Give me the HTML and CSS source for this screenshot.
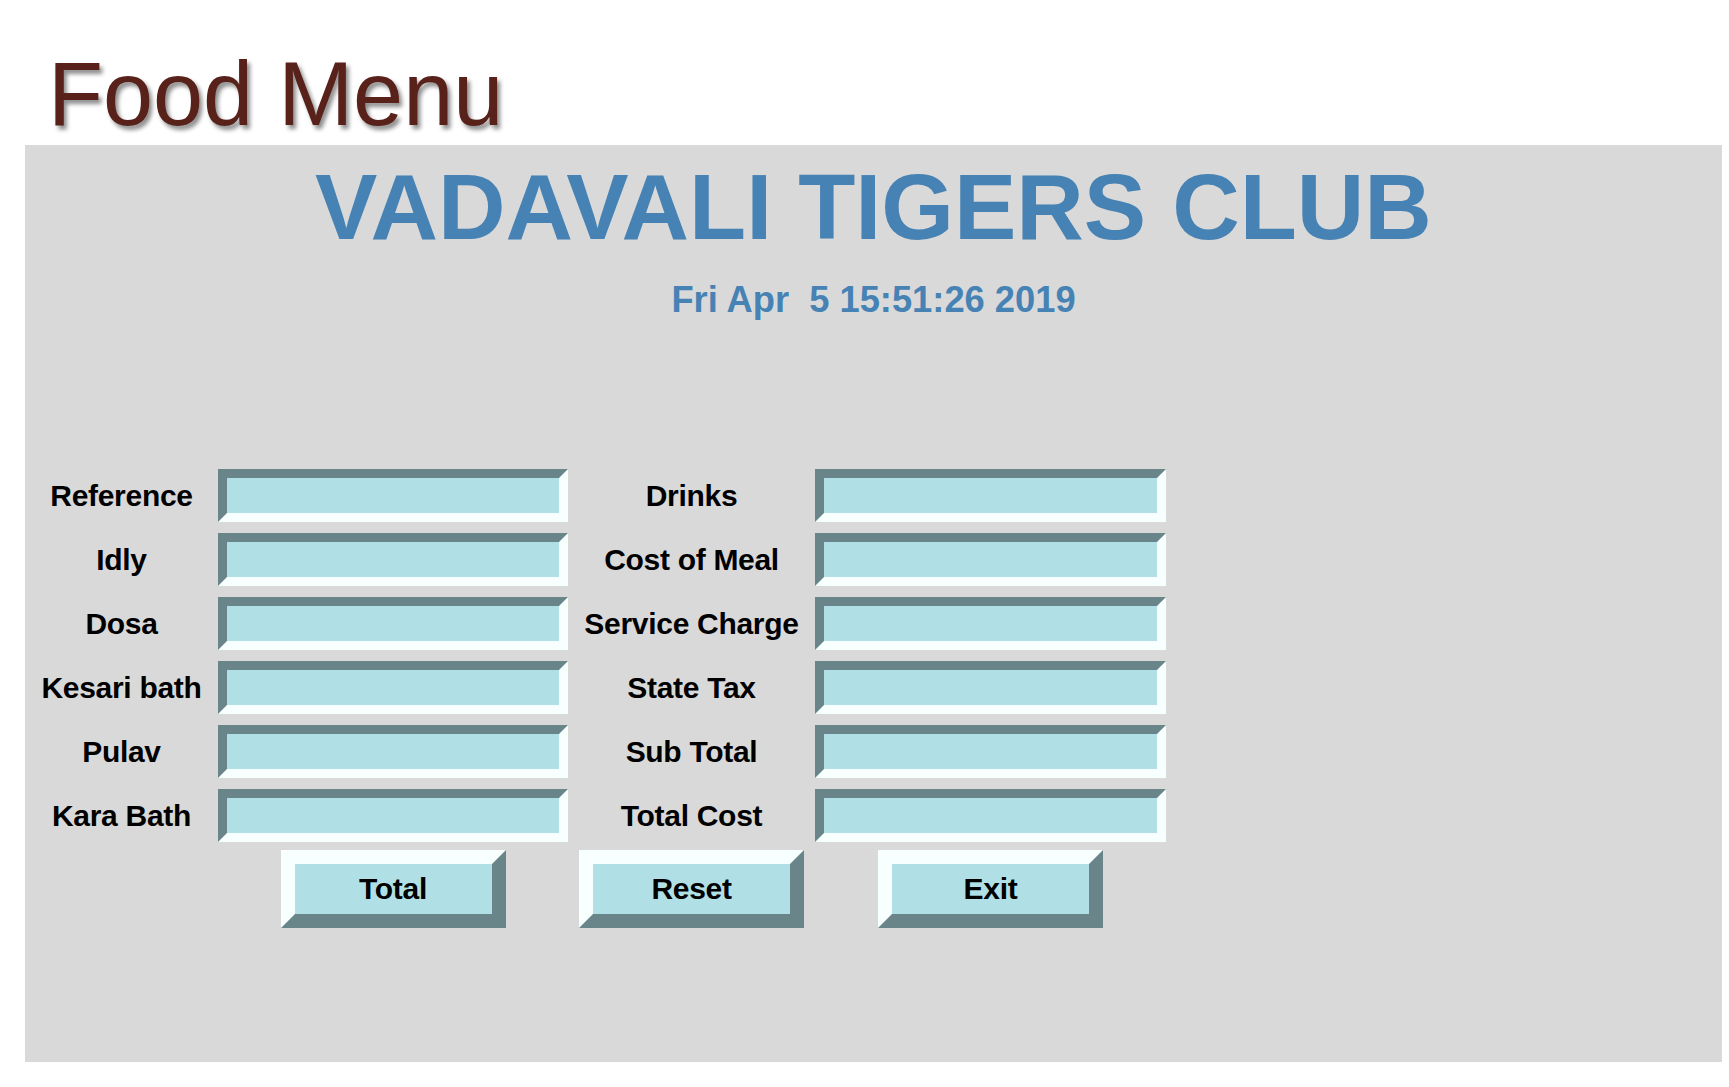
FILE: index.html
```html
<!DOCTYPE html>
<html lang="en">
<head>
<meta charset="utf-8">
<title>Food Menu</title>
<link rel="stylesheet" href="styles.css">
</head>
<body>
  <header class="page-head">
    <h1 class="page-title">Food Menu</h1>
  </header>
  <main class="panel">
    <h2 class="club-name">VADAVALI TIGERS CLUB</h2>
    <div class="clock">Fri Apr  5 15:51:26 2019</div>

    <form class="form-grid">
      <label class="lbl lbl-left">Reference</label>
      <input class="entry" type="text">
      <label class="lbl lbl-mid">Drinks</label>
      <input class="entry" type="text">

      <label class="lbl lbl-left">Idly</label>
      <input class="entry" type="text">
      <label class="lbl lbl-mid">Cost of Meal</label>
      <input class="entry" type="text">

      <label class="lbl lbl-left">Dosa</label>
      <input class="entry" type="text">
      <label class="lbl lbl-mid">Service Charge</label>
      <input class="entry" type="text">

      <label class="lbl lbl-left">Kesari bath</label>
      <input class="entry" type="text">
      <label class="lbl lbl-mid">State Tax</label>
      <input class="entry" type="text">

      <label class="lbl lbl-left">Pulav</label>
      <input class="entry" type="text">
      <label class="lbl lbl-mid">Sub Total</label>
      <input class="entry" type="text">

      <label class="lbl lbl-left">Kara Bath</label>
      <input class="entry" type="text">
      <label class="lbl lbl-mid">Total Cost</label>
      <input class="entry" type="text">
    </form>

    <div class="actions">
      <span class="spacer"></span>
      <button class="btn" type="button">Total</button>
      <button class="btn" type="button">Reset</button>
      <button class="btn" type="button">Exit</button>
    </div>
  </main>
</body>
</html>
```
FILE: styles.css
```css
html, body {
  margin: 0;
  padding: 0;
  background: #ffffff;
  font-family: "Liberation Sans", Arial, sans-serif;
}

.page-head {
  height: 145px;
  box-sizing: border-box;
  padding: 49px 0 0 48px;
}

.page-title {
  margin: 0;
  font-size: 90px;
  line-height: 90px;
  font-weight: normal;
  color: #58221a;
  text-shadow: 3px 4px 4px rgba(0, 0, 0, 0.45);
}

.panel {
  margin-left: 25px;
  width: 1697px;
  height: 917px;
  box-sizing: border-box;
  background: #d9d9d9;
  padding-top: 15px;
}

.club-name {
  margin: 0;
  text-align: center;
  font-size: 93.5px;
  line-height: 93.5px;
  font-weight: bold;
  color: #4682b4;
}

.clock {
  margin-top: 28px;
  text-align: center;
  font-size: 36.3px;
  line-height: 36px;
  font-weight: bold;
  color: #4682b4;
  white-space: pre;
}

.form-grid {
  margin: 151px 0 0 0;
  display: grid;
  grid-template-columns: 193px 350px 247px 351px;
  grid-auto-rows: 53px;
  row-gap: 11px;
  align-items: center;
}

.lbl {
  font-size: 30px;
  font-weight: bold;
  color: #000000;
  text-align: center;
  white-space: nowrap;
  letter-spacing: -0.3px;
  padding-top: 2px;
}

.entry {
  box-sizing: border-box;
  width: 100%;
  height: 53px;
  margin: 0;
  padding: 0 6px;
  background: #b0e0e6;
  border: 9px solid;
  border-color: #6a8589 #f7ffff #f7ffff #6a8589;
  font-family: "Liberation Sans", Arial, sans-serif;
  font-size: 24px;
  outline: none;
}

.actions {
  margin-top: 8px;
  display: grid;
  grid-template-columns: 193px 350px 247px 351px;
  justify-items: center;
}

.btn {
  box-sizing: border-box;
  width: 225px;
  height: 78px;
  margin: 0;
  padding: 0;
  background: #b0e0e6;
  border: 14px solid;
  border-color: #f7ffff #6a8589 #6a8589 #f7ffff;
  font-family: "Liberation Sans", Arial, sans-serif;
  font-size: 30px;
  font-weight: bold;
  letter-spacing: -0.3px;
  color: #000000;
  cursor: pointer;
}
```
